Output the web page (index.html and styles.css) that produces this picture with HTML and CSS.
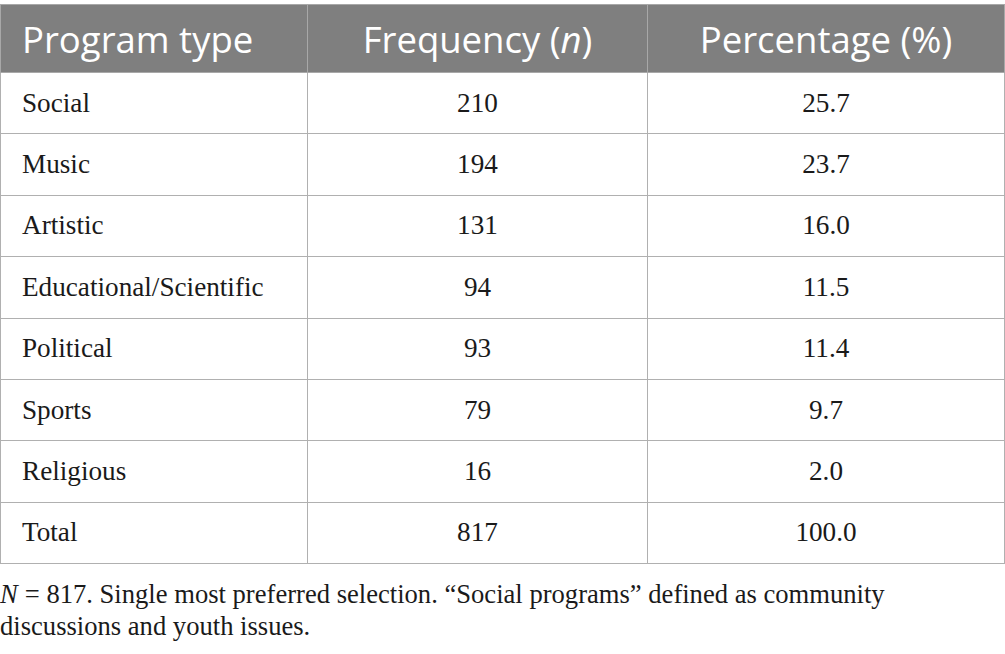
FILE: index.html
```html
<!DOCTYPE html>
<html>
<head>
<meta charset="utf-8">
<link rel="stylesheet" href="styles.css">
</head>
<body>
<div class="page">
<table class="data">
<colgroup><col class="c1"><col class="c2"><col class="c3"></colgroup>
<thead>
<tr><th class="left">Program type</th><th>Frequency (<i>n</i>)</th><th>Percentage (%)</th></tr>
</thead>
<tbody>
<tr><td class="left">Social</td><td>210</td><td>25.7</td></tr>
<tr><td class="left">Music</td><td>194</td><td>23.7</td></tr>
<tr><td class="left">Artistic</td><td>131</td><td>16.0</td></tr>
<tr><td class="left">Educational/Scientific</td><td>94</td><td>11.5</td></tr>
<tr><td class="left">Political</td><td>93</td><td>11.4</td></tr>
<tr><td class="left">Sports</td><td>79</td><td>9.7</td></tr>
<tr><td class="left">Religious</td><td>16</td><td>2.0</td></tr>
<tr><td class="left">Total</td><td>817</td><td>100.0</td></tr>
</tbody>
</table>
<p class="note"><i class="sym">N</i>= 817. Single most preferred selection. “Social programs” defined as community discussions and youth issues.</p>
</div>
</body>
</html>
```
FILE: styles.css
```css
html, body {
  margin: 0;
  padding: 0;
  background: #ffffff;
}
.page {
  padding-top: 4px;
  width: 1005px;
}
.data {
  border-collapse: collapse;
  width: 1004px;
  table-layout: fixed;
}
.c1 { width: 307px; }
.c2 { width: 340px; }
.c3 { width: 357px; }
.data th {
  background: #7f7f7f;
  color: #ffffff;
  font-family: "Open Sans", "Noto Sans", sans-serif;
  font-weight: 400;
  font-size: 36.5px;
  height: 68px;
  padding: 0 10px;
  text-align: center;
  border: 1.5px solid #a8a8a8;
  box-sizing: border-box;
  vertical-align: middle;
}
.data td {
  font-family: "Liberation Serif", "DejaVu Serif", serif;
  font-size: 27.2px;
  color: #1a1a1a;
  height: 61.4px;
  padding: 0 10px;
  text-align: center;
  border: 1.5px solid #b0b0b0;
  box-sizing: border-box;
  vertical-align: middle;
}
.data .left { text-align: left; padding-left: 21px; }
.note {
  margin: 14px 0 0 0;
  font-family: "Liberation Serif", "DejaVu Serif", serif;
  font-size: 26.6px;
  line-height: 32px;
  color: #1a1a1a;
  width: 960px;
}
.note .sym {
  display: inline-block;
  margin-right: 7px;
}
```
